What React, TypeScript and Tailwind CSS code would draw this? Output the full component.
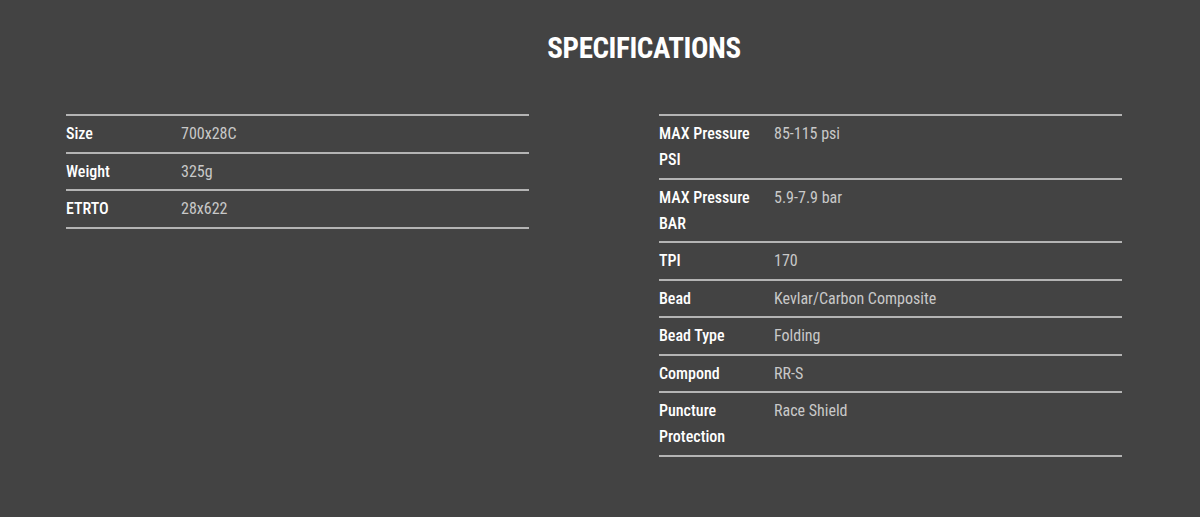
import React from "react";

type Spec = { label: string; value: string };

const leftSpecs: Spec[] = [
  { label: "Size", value: "700x28C" },
  { label: "Weight", value: "325g" },
  { label: "ETRTO", value: "28x622" },
];

const rightSpecs: Spec[] = [
  { label: "MAX Pressure PSI", value: "85-115 psi" },
  { label: "MAX Pressure BAR", value: "5.9-7.9 bar" },
  { label: "TPI", value: "170" },
  { label: "Bead", value: "Kevlar/Carbon Composite" },
  { label: "Bead Type", value: "Folding" },
  { label: "Compond", value: "RR-S" },
  { label: "Puncture Protection", value: "Race Shield" },
];

const SpecTable: React.FC<{ specs: Spec[] }> = ({ specs }) => (
  <div className="w-[463px] border-t-2 border-[#b4b4b4]">
    {specs.map((s) => (
      <div
        key={s.label}
        className="flex border-b-2 border-[#b4b4b4] pt-[5px] pb-[4.5px] text-[16px] leading-[26px]"
      >
        <div className="w-[115px] shrink-0 pr-3 font-medium text-white">{s.label}</div>
        <div className="text-[#c9c9c9]">{s.value}</div>
      </div>
    ))}
  </div>
);

export default function App() {
  return (
    <div
      className="min-h-[517px] bg-[#434343] pt-[30px]"
      style={{ fontFamily: '"Roboto Condensed", "Liberation Sans Narrow", "DejaVu Sans Condensed", sans-serif' }}
    >
      <h1 className="pl-[88px] text-center text-[29px] font-bold leading-[36px] tracking-[-0.4px] text-white">
        SPECIFICATIONS
      </h1>
      <div className="mt-[48px] flex gap-[130px] pl-[66px]">
        <div>
          <SpecTable specs={leftSpecs} />
        </div>
        <div>
          <SpecTable specs={rightSpecs} />
        </div>
      </div>
    </div>
  );
}
